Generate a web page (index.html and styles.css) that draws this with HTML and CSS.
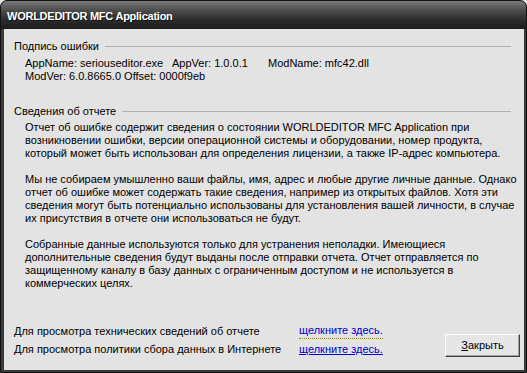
FILE: index.html
```html
<!DOCTYPE html>
<html lang="ru">
  <head>
    <meta charset="UTF-8" />
    <meta name="viewport" content="width=device-width, initial-scale=1.0" />
    <title>WORLDEDITOR MFC Application</title>
    <link rel="stylesheet" href="styles.css">
  </head>
  <body>
    <div class="window">
      <div class="titlebar">WORLDEDITOR MFC Application</div>
      <div class="client">
        <div class="group">
          <div class="group-head"><span>Подпись ошибки</span></div>
          <div class="sig">
            <div class="sig-row">
              <span>AppName: seriouseditor.exe</span>
              <span>AppVer: 1.0.0.1</span>
              <span>ModName: mfc42.dll</span>
            </div>
            <div>ModVer: 6.0.8665.0 Offset: 0000f9eb</div>
          </div>
        </div>
        <div class="group group-report">
          <div class="group-head"><span>Сведения об отчете</span></div>
          <div class="report">
            <p>Отчет об ошибке содержит сведения о состоянии WORLDEDITOR MFC Application при<br>
              возникновении ошибки, версии операционной системы и оборудовании, номер продукта,<br>
              который может быть использован для определения лицензии, а также IP-адрес компьютера.</p>
            <p>Мы не собираем умышленно ваши файлы, имя, адрес и любые другие личные данные. Однако<br>
              отчет об ошибке может содержать такие сведения, например из открытых файлов. Хотя эти<br>
              сведения могут быть потенциально использованы для установления вашей личности, в случае<br>
              их присутствия в отчете они использоваться не будут.</p>
            <p>Собранные данные используются только для устранения неполадки. Имеющиеся<br>
              дополнительные сведения будут выданы после отправки отчета. Отчет отправляется по<br>
              защищенному каналу в базу данных с ограниченным доступом и не используется в<br>
              коммерческих целях.</p>
          </div>
        </div>
        <div class="footer">
          <div class="links">
            <span>Для просмотра технических сведений об отчете</span>
            <a href="#" class="focused">щелкните здесь.</a>
            <span>Для просмотра политики сбора данных в Интернете</span>
            <a href="#">щелкните здесь.</a>
          </div>
          <button class="btn"><u>З</u>акрыть</button>
        </div>
      </div>
    </div>
  </body>
</html>
```

FILE: styles.css
```css
body {
  margin: 0;
  background: #e3e3e3;
  font-family: "Liberation Sans", Arial, sans-serif;
  font-size: 11px;
  color: #000;
}
.window {
  width: 527px;
  height: 373px;
  box-sizing: border-box;
  display: flex;
  flex-direction: column;
  background: #3a3a3a;
  border: 1px solid #111;
  border-radius: 7px 7px 0 0;
  overflow: hidden;
}
.titlebar {
  height: 28px;
  flex: none;
  padding-left: 6px;
  line-height: 30px;
  font-weight: bold;
  letter-spacing: -0.25px;
  color: #fff;
  text-shadow: 1px 1px 0 #111;
  background: linear-gradient(#7a7a7a, #4a4a4a 35%, #2a2a2a 70%, #1c1c1c);
}
.client {
  flex: 1;
  display: flex;
  flex-direction: column;
  margin: 0 2px 2px 3px;
  padding: 11px 4px 12px 10px;
  background: #e3e3e3;
  line-height: 13px;
}
.group {
  margin-right: 9px;
}
.group-report {
  margin-top: 22px;
}
.group-head {
  display: flex;
  align-items: center;
  gap: 6px;
}
.group-head::after {
  content: "";
  flex: 1;
  border-top: 1px solid #b0b0b0;
}
.sig {
  margin: 4px 0 0 11px;
}
.sig-row {
  display: grid;
  grid-template-columns: 147px 96px auto;
}
.report {
  margin: 3px 0 0 11px;
  white-space: nowrap;
}
.report p {
  margin: 0 0 13px;
}
.footer {
  margin-top: auto;
  display: flex;
  align-items: flex-end;
  justify-content: space-between;
}
.links {
  display: grid;
  grid-template-columns: 285px auto;
  line-height: 18px;
}
.links a {
  color: #0000cc;
  justify-self: start;
}
.links a.focused {
  text-decoration: none;
  border-bottom: 1px dotted #8a8a00;
  line-height: 15px;
  align-self: center;
}
.btn {
  width: 75px;
  height: 23px;
  margin-bottom: 1px;
  padding: 0;
  font: inherit;
  color: #000;
  background: #e6e6e6;
  border: 1px solid;
  border-color: #fff #404040 #404040 #fff;
  box-shadow: inset -1px -1px 0 #a0a0a0;
}
```
